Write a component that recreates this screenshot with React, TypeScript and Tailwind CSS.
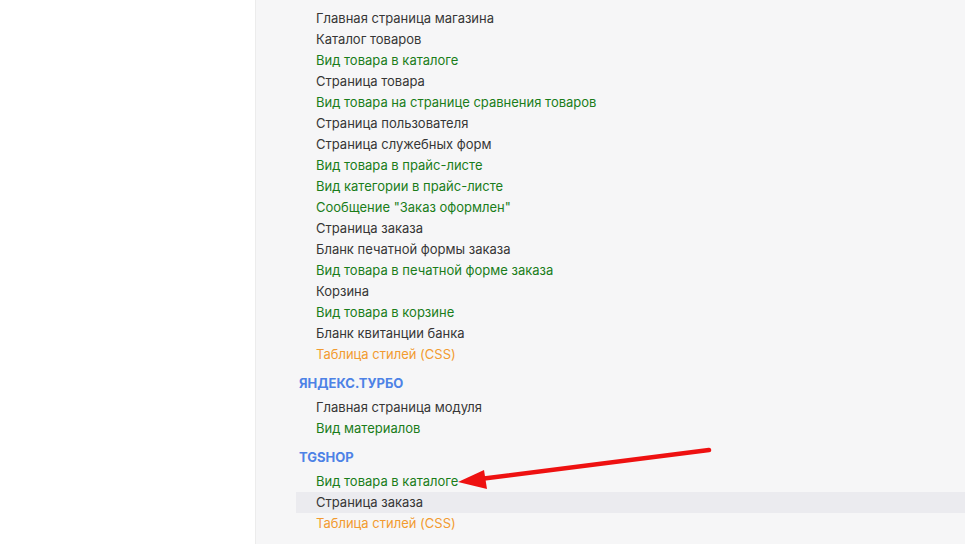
import React from "react";

type Kind = "page" | "tpl" | "css";

type Item = { label: string; kind: Kind; active?: boolean };

type Section = { title?: string; items: Item[] };

const sections: Section[] = [
  {
    items: [
      { label: "Главная страница магазина", kind: "page" },
      { label: "Каталог товаров", kind: "page" },
      { label: "Вид товара в каталоге", kind: "tpl" },
      { label: "Страница товара", kind: "page" },
      { label: "Вид товара на странице сравнения товаров", kind: "tpl" },
      { label: "Страница пользователя", kind: "page" },
      { label: "Страница служебных форм", kind: "page" },
      { label: "Вид товара в прайс-листе", kind: "tpl" },
      { label: "Вид категории в прайс-листе", kind: "tpl" },
      { label: 'Сообщение "Заказ оформлен"', kind: "tpl" },
      { label: "Страница заказа", kind: "page" },
      { label: "Бланк печатной формы заказа", kind: "page" },
      { label: "Вид товара в печатной форме заказа", kind: "tpl" },
      { label: "Корзина", kind: "page" },
      { label: "Вид товара в корзине", kind: "tpl" },
      { label: "Бланк квитанции банка", kind: "page" },
      { label: "Таблица стилей (CSS)", kind: "css" },
    ],
  },
  {
    title: "Яндекс.Турбо",
    items: [
      { label: "Главная страница модуля", kind: "page" },
      { label: "Вид материалов", kind: "tpl" },
    ],
  },
  {
    title: "TGShop",
    items: [
      { label: "Вид товара в каталоге", kind: "tpl" },
      { label: "Страница заказа", kind: "page", active: true },
      { label: "Таблица стилей (CSS)", kind: "css" },
    ],
  },
];

const kindColor: Record<Kind, string> = {
  page: "text-[#363636]",
  tpl: "text-[#1a7d1a]",
  css: "text-[#f29b30]",
};

export default function App() {
  return (
    <div className="relative flex h-[544px] w-[965px] overflow-hidden bg-white font-['Inter','Noto_Sans',sans-serif]">
      <div className="w-[256px] shrink-0 border-r border-[#ececec] bg-white" />
      <div className="flex-1 bg-[#f6f6f7] pl-[40px] pt-[8px]">
        {sections.map((section, i) => (
          <div key={i}>
            {section.title ? (
              <div className="mb-[3px] mt-[8px] h-[21px] pl-[3px] text-[13px] font-bold uppercase leading-[21px] text-[#4d82e6]">
                {section.title}
              </div>
            ) : null}
            {section.items.map((item, j) => (
              <div
                key={j}
                className={`h-[21px] pl-[20px] text-[13px] leading-[21px] ${kindColor[item.kind]} ${item.active ? "bg-[#ebebef]" : ""}`}
              >
                {item.label}
              </div>
            ))}
          </div>
        ))}
      </div>
      <svg className="pointer-events-none absolute left-0 top-0" width="965" height="544">
        <line x1="709" y1="450" x2="480" y2="479" stroke="#ee1111" strokeWidth="4.5" strokeLinecap="round" />
        <polygon points="458,482 484,470 487,489" fill="#ee1111" />
      </svg>
    </div>
  );
}
